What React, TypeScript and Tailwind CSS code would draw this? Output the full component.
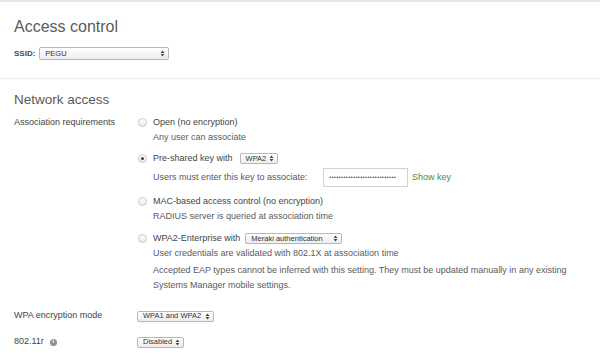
import React from 'react';

const Arrows = () => (
    <svg width="5" height="7" viewBox="0 0 5 7" className="shrink-0">
        <path d="M0.6 3 L2.5 0.6 L4.4 3 Z M0.6 4 L2.5 6.4 L4.4 4 Z" fill="#444" />
    </svg>
);

const FakeSelect = ({ label, className }: { label: string; className: string }) => (
    <span
        className={`inline-flex items-center justify-between border border-[#b8b8b8] rounded-[2px] bg-gradient-to-b from-white to-[#ececec] pl-[5px] pr-[3px] text-[7.5px] text-[#333] leading-none shadow-[0_0.5px_0_rgba(0,0,0,0.05)] ${className}`}
    >
        <span>{label}</span>
        <Arrows />
    </span>
);

const Radio = ({ checked }: { checked?: boolean }) => (
    <span className="w-[9px] h-[9px] rounded-full border border-[#c8c8c8] bg-gradient-to-b from-[#fdfdfd] to-[#ebebeb] flex items-center justify-center shrink-0">
        {checked && <span className="w-[3px] h-[3px] rounded-full bg-[#444]" />}
    </span>
);

const Option = ({ checked, children }: { checked?: boolean; children: React.ReactNode }) => (
    <div className="flex items-center h-[15px] gap-[6px] text-[#444]">
        <Radio checked={checked} />
        <div className="flex items-center">{children}</div>
    </div>
);

const Desc = ({ children, className = '' }: { children: React.ReactNode; className?: string }) => (
    <div className={`pl-[15px] text-[#5a5a5a] leading-[15px] ${className}`}>{children}</div>
);

export default function App() {
    return (
        <div className="w-[600px] h-[357px] bg-white overflow-hidden font-['Liberation_Sans',Arial,sans-serif] text-[9px] text-[#444]">
            <div className="h-[2px] bg-[#e6e6e6]" />

            {/* Access control */}
            <section className="px-[14px] pt-[15px] pb-[18px] border-b border-[#ededed]">
                <h1 className="text-[16px] leading-[20px] text-[#5a5a5a]">Access control</h1>
                <div className="mt-[10px] flex items-center h-[13px] gap-[4px]">
                    <span className="text-[8px] font-bold text-[#4a4a4a]">SSID:</span>
                    <FakeSelect label="PEGU" className="w-[130px] h-[13px]" />
                </div>
            </section>

            {/* Network access */}
            <section className="px-[14px] pt-[12px]">
                <h2 className="text-[13.5px] leading-[18px] text-[#5a5a5a]">Network access</h2>

                <div className="flex mt-[6px]">
                    <div className="w-[124px] h-[15px] flex items-center shrink-0">Association requirements</div>
                    <div className="flex flex-col">
                        <Option>Open (no encryption)</Option>
                        <Desc>Any user can associate</Desc>

                        <div className="mt-[6px]">
                            <Option checked>
                                Pre-shared key with
                                <FakeSelect label="WPA2" className="ml-[7px] w-[38px] h-[11px]" />
                            </Option>
                        </div>
                        <div className="pl-[15px] mt-[2px] flex items-center h-[19px] text-[#5a5a5a]">
                            <span className="w-[170px]">Users must enter this key to associate:</span>
                            <span className="w-[85px] h-[19px] border border-[#d2d2d2] bg-white flex items-center pl-[5px] text-[6px] tracking-[0.3px] text-[#555] overflow-hidden">
                                ••••••••••••••••••••••••••••
                            </span>
                            <span className="ml-[4px] text-[#4e8c2f]">Show key</span>
                        </div>

                        <div className="mt-[7px]">
                            <Option>MAC-based access control (no encryption)</Option>
                        </div>
                        <Desc>RADIUS server is queried at association time</Desc>

                        <div className="mt-[7px]">
                            <Option>
                                WPA2-Enterprise with
                                <FakeSelect label="Meraki authentication" className="ml-[5px] w-[97px] h-[11px]" />
                            </Option>
                        </div>
                        <Desc>User credentials are validated with 802.1X at association time</Desc>
                        <Desc className="mt-[2px] leading-[14px] w-[445px]">
                            Accepted EAP types cannot be inferred with this setting. They must be updated manually in any existing
                            Systems Manager mobile settings.
                        </Desc>
                    </div>
                </div>

                <div className="flex items-center h-[14px] mt-[16px]">
                    <div className="w-[123px] shrink-0">WPA encryption mode</div>
                    <FakeSelect label="WPA1 and WPA2" className="w-[77px] h-[11px]" />
                </div>

                <div className="flex items-center h-[14px] mt-[12px]">
                    <div className="w-[123px] shrink-0 flex items-center gap-[6px]">
                        802.11r
                        <span className="w-[7px] h-[7px] rounded-full bg-[#8f8f8f] text-white text-[5.5px] font-bold leading-none flex items-center justify-center">
                            i
                        </span>
                    </div>
                    <FakeSelect label="Disabled" className="w-[47px] h-[11px]" />
                </div>
            </section>
        </div>
    );
}
